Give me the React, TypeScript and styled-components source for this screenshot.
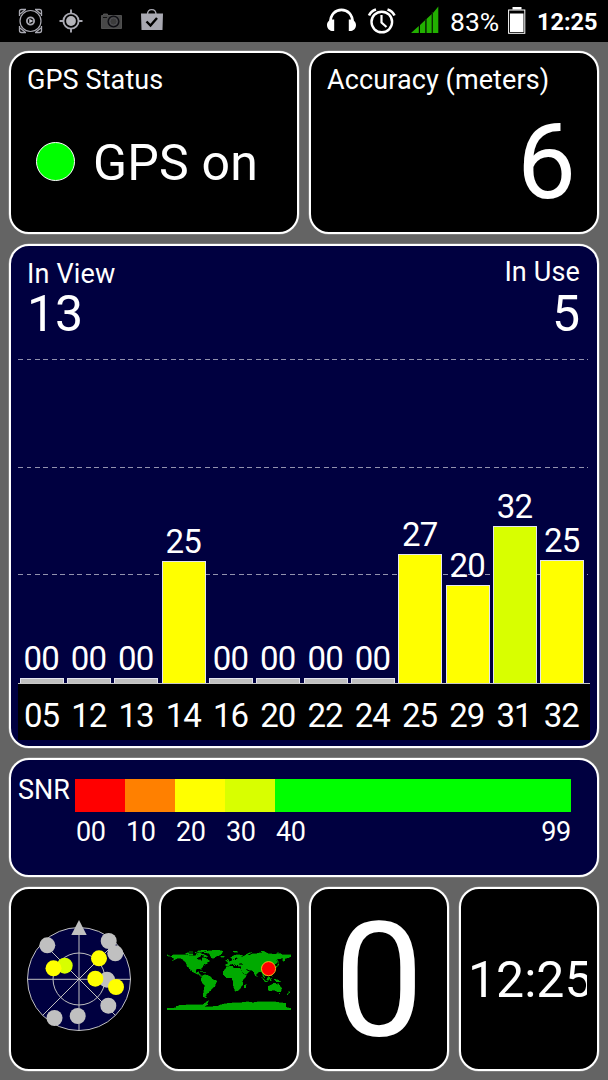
import React from 'react';
import styled, { createGlobalStyle } from 'styled-components';

const GlobalStyle = createGlobalStyle`
  * { box-sizing: border-box; }
  html, body { margin: 0; padding: 0; background: #646464; }
  body { font-family: Roboto, "Liberation Sans", sans-serif; color: #fff; overflow: hidden; }
  svg { display: block; flex: none; }
`;

const Screen = styled.div`
  width: 608px;
  height: 1080px;
  display: flex;
  flex-direction: column;
  background: #646464;
`;

const StatusBar = styled.header`
  height: 42px;
  background: #000;
  display: flex;
  justify-content: space-between;
  padding: 0 10px 0 16px;
`;

const StatusGroup = styled.div`
  display: flex;
  align-items: center;
`;

const StatusText = styled.span<{ $size: number; $weight: number; $width: number }>`
  font-size: ${p => p.$size}px;
  font-weight: ${p => p.$weight};
  width: ${p => p.$width}px;
  line-height: 44px;
  height: 42px;
  white-space: nowrap;
`;

const Board = styled.main`
  flex: 1;
  display: flex;
  flex-direction: column;
  gap: 10px;
  padding: 9px;
`;

const CardRow = styled.div<{ $cols: number; $height: number }>`
  display: grid;
  grid-template-columns: repeat(${p => p.$cols}, 1fr);
  grid-template-rows: 100%;
  gap: 10px;
  height: ${p => p.$height}px;
  flex: none;
`;

const Card = styled.section<{ $navy?: boolean; $center?: boolean }>`
  border: 2px solid #fff;
  border-radius: 20px;
  box-shadow: 0 0 0 0.5px rgba(255, 255, 255, 0.35);
  background: ${p => (p.$navy ? '#000040' : '#000')};
  display: flex;
  flex-direction: column;
  min-width: 0;
  ${p => p.$center && 'align-items: center; justify-content: center;'}
`;

const Label = styled.div`
  font-size: 27px;
  line-height: 32px;
  letter-spacing: 0.1px;
  padding: 11px 16px 0;
  white-space: nowrap;
`;

const GpsState = styled.div`
  display: flex;
  align-items: center;
  gap: 18px;
  margin: 38px 0 0 25px;
  font-size: 50px;
  line-height: 58px;
  letter-spacing: 0.2px;
  white-space: nowrap;
`;

const Lamp = styled.span`
  width: 39px;
  height: 39px;
  margin-bottom: 4px;
  border-radius: 50%;
  background: #00ff00;
  border: 1.5px solid #fff;
`;

const AccuracyValue = styled.div`
  font-size: 105px;
  line-height: 120px;
  margin-top: 7px;
  padding-right: 21px;
  text-align: right;
`;

const Counters = styled.div`
  display: flex;
  justify-content: space-between;
  height: 113px;
  padding: 0 17px 0 16px;
`;

const Counter = styled.div<{ $top: number; $right?: boolean }>`
  padding-top: ${p => p.$top}px;
  text-align: ${p => (p.$right ? 'right' : 'left')};
`;

const CounterName = styled.div`
  font-size: 27px;
  line-height: 32px;
  letter-spacing: 0.15px;
`;

const CounterValue = styled.div<{ $height: number }>`
  font-size: 50px;
  line-height: ${p => p.$height}px;
`;

const Plot = styled.div`
  position: relative;
  height: 325px;
  margin: 0 7px;
  border-bottom: 1px solid #c8c8c8;
`;

const GridLines = styled.div`
  position: absolute;
  inset: 0;
  display: flex;
  flex-direction: column;
`;

const GridLine = styled.div`
  flex: none;
  height: 107.7px;
  &::before {
    content: '';
    display: block;
    height: 1px;
    width: 570px;
    background: repeating-linear-gradient(90deg, #9292ae 0 4.7px, transparent 4.7px 8.5px);
  }
`;

const Columns = styled.div`
  position: relative;
  width: 568px;
  height: 100%;
  display: grid;
  grid-template-columns: repeat(12, 1fr);
`;

const Column = styled.div`
  display: flex;
  flex-direction: column;
  justify-content: flex-end;
  align-items: center;
  font-size: 33px;
  letter-spacing: -0.8px;
`;

const BarValue = styled.span`
  line-height: 38px;
  padding-right: 1px;
`;

const Bar = styled.div<{ $height: number; $color: string }>`
  width: 44px;
  height: ${p => p.$height}px;
  background: ${p => p.$color};
  border: 1px solid #e4e4f0;
  border-bottom: 0;
`;

const SatelliteIds = styled.div`
  height: 56px;
  margin: 0 7px;
  padding-right: 5px;
  background: #000;
  display: grid;
  grid-template-columns: repeat(12, 1fr);
  text-align: center;
  font-size: 33px;
  letter-spacing: -0.8px;
  line-height: 64px;
`;

const Legend = styled.div`
  display: flex;
  padding: 19px 26px 0 7px;
  font-size: 27px;
`;

const LegendName = styled.div`
  width: 57px;
  line-height: 23px;
`;

const Scale = styled.div`
  flex: 1;
  display: grid;
  grid-template-columns: 50px 50px 50px 50px 1fr;
`;

const Step = styled.div`
  letter-spacing: -0.3px;
`;

const Swatch = styled.div<{ $color: string }>`
  height: 33px;
  background: ${p => p.$color};
`;

const StepLabels = styled.div`
  display: flex;
  justify-content: space-between;
  line-height: 41px;
  padding-left: 1px;
`;

const Speed = styled.div`
  font-size: 160px;
  line-height: 170px;
  padding-top: 3px;
`;

const Clock = styled.div`
  width: 119px;
  overflow: hidden;
  font-size: 50px;
  line-height: 60px;
  white-space: nowrap;
  margin: 2px 3px 0 0;
`;

const bars = [
  { id: '05', snr: '00', h: 5 },
  { id: '12', snr: '00', h: 5 },
  { id: '13', snr: '00', h: 5 },
  { id: '14', snr: '25', h: 122 },
  { id: '16', snr: '00', h: 5 },
  { id: '20', snr: '00', h: 5 },
  { id: '22', snr: '00', h: 5 },
  { id: '24', snr: '00', h: 5 },
  { id: '25', snr: '27', h: 129 },
  { id: '29', snr: '20', h: 98 },
  { id: '31', snr: '32', h: 157 },
  { id: '32', snr: '25', h: 123 },
];

const barColor = (snr: string) => {
  const n = Number(snr);
  if (n === 0) return '#c0c0c0';
  return n >= 30 ? '#d8ff00' : '#ffff00';
};

const steps = [
  { label: '00', color: '#ff0000' },
  { label: '10', color: '#ff8000' },
  { label: '20', color: '#ffff00' },
  { label: '30', color: '#d8ff00' },
  { label: '40', color: '#00ff00', end: '99' },
];

const satellites: [number, number, string][] = [
  [47.3, 945.3, '#c0c0c0'],
  [108.7, 941, '#c0c0c0'],
  [115.3, 953.3, '#c0c0c0'],
  [64.7, 965.7, '#d8ff00'],
  [53.5, 968.3, '#ffff00'],
  [99, 958.3, '#ffff00'],
  [107, 979.7, '#c0c0c0'],
  [95.3, 978.7, '#ffff00'],
  [116, 987, '#ffff00'],
  [108.3, 1005.7, '#c0c0c0'],
  [77.7, 1016, '#c0c0c0'],
  [54.5, 1018, '#c0c0c0'],
];

const SkyView = () => (
  <svg width="116" height="120" viewBox="21 919 116 120">
    <circle cx="79" cy="979" r="51.5" fill="#000040" stroke="#c0c0c0" strokeWidth="1" />
    <g stroke="#c0c0c0" strokeWidth="1" fill="none">
      <circle cx="79" cy="979" r="26" />
      <path d="M27.5 979.3h103M79 927.500v103M42.500 942.500l73 73M115.500 942.500l-73 73" />
    </g>
    <path d="M79 920l7.700 15h-15.400z" fill="#c0c0c0" />
    {satellites.map(([x, y, c], i) => (
      <circle key={i} cx={x} cy={y} r="8" fill={c} />
    ))}
  </svg>
);

/* Land outlines as longitude / latitude pairs. */
const land: string[] = [
  '-168,66 -162,70 -156,71 -140,70 -128,70 -115,68 -108,68 -96,68 -94,72 -88,68 -82,69 -82,66 -87,64 -94,60 -92,57 -82,55 -80,51 -78,55 -77,60 -78,62 -70,61 -65,59 -60,55 -56,52 -60,50 -66,49 -60,46 -66,44 -70,43 -74,40 -76,35 -81,31 -80,26 -83,29 -90,30 -97,28 -97,22 -94,18 -90,21 -87,21 -88,16 -83,15 -83,10 -78,9 -83,8 -88,13 -95,16 -105,20 -109,26 -114,31 -110,24 -117,33 -122,37 -124,47 -131,54 -140,60 -150,60 -160,55 -166,54 -158,58 -165,62',
  '-180,71 -176,71 -176,68 -170,66 -170,65 -180,68',
  '-78,9 -72,12 -62,11 -52,5 -50,0 -35,-6 -39,-14 -41,-22 -48,-26 -53,-34 -58,-35 -58,-39 -65,-42 -66,-47 -69,-51 -65,-55 -74,-53 -75,-45 -72,-30 -70,-18 -76,-14 -81,-5 -80,1',
  '-73,78 -60,82 -30,84 -18,81 -22,73 -25,70 -40,65 -43,60 -50,61 -54,68 -58,75 -70,76',
  '-92,73 -82,73 -72,71 -62,66 -66,62 -74,65 -73,68 -80,70 -90,71',
  '-118,73 -105,73 -104,69 -114,69 -118,71',
  '-126,75 -117,76 -116,73 -124,71',
  '-98,77 -86,76 -80,74 -94,74',
  '-92,81 -80,83 -64,83 -76,79 -88,77 -90,79',
  '-116,79 -104,79 -104,77 -116,77',
  '-24,66 -14,66 -14,64 -22,63',
  '-10,55 -6,55 -6,52 -10,52',
  '-6,58 -2,58 0,53 2,51 -5,50 -3,54',
  '-17,21 -9,32 -5,36 10,37 11,33 20,31 32,31 37,22 43,12 51,12 48,5 41,-2 39,-8 40,-16 35,-22 32,-28 26,-34 18,-35 14,-25 12,-17 13,-8 9,-1 9,4 -8,4 -13,9 -17,14',
  '44,-25 48,-25 50,-15 44,-18',
  '-10,37 -9,43 -1,44 -4,48 3,51 8,54 10,58 13,55 20,55 24,59 30,60 22,61 25,65 18,61 16,56 10,59 5,60 6,63 15,69 28,71 40,67 33,66 38,64 45,68 60,69 68,73 80,73 88,76 104,78 114,74 130,72 142,73 160,70 180,70 180,66 178,63 163,60 162,53 157,51 156,58 162,62 150,59 142,59 135,54 141,52 139,47 132,43 128,39 129,35 126,35 125,39 118,39 122,36 120,32 121,27 116,23 108,21 109,13 105,9 100,13 104,2 98,9 97,17 91,22 87,21 80,15 79,9 76,10 73,19 67,25 57,26 49,30 52,24 59,22 54,17 44,13 39,21 35,29 36,36 27,37 26,40 32,42 41,42 37,46 30,46 28,42 23,40 22,37 19,41 13,45 18,40 16,38 10,44 3,42 -1,37 -6,36',
  '130,32 136,35 141,39 142,45 145,43 140,35 134,33',
  '142,54 144,50 142,46',
  '80,9 82,7 80,6',
  '95,5 101,0 106,-6 114,-8 105,-8 98,1',
  '109,1 116,7 119,4 116,-4 110,-3',
  '119,0 125,1 121,-1 123,-5 120,-5',
  '120,18 122,18 126,7 122,10',
  '131,-1 140,-2 150,-8 146,-8 138,-8 133,-4',
  '114,-22 122,-18 130,-12 136,-12 136,-15 141,-17 142,-11 146,-18 153,-27 150,-37 141,-38 137,-34 130,-32 118,-35 115,-34',
  '144,-41 148,-41 147,-43',
  '173,-35 178,-38 175,-41 173,-40',
  '172,-41 173,-43 168,-47 167,-45',
  '50,71 56,75 68,77 58,73 55,70',
  '12,80 22,80 26,79 16,77',
  '92,80 100,81 104,79 96,78',
  '138,76 150,75 140,74',
  '-180,-85 -152,-84 -154,-80 -145,-77 -120,-75 -100,-75 -75,-74 -66,-67 -58,-63 -64,-72 -61,-75 -75,-79 -60,-81 -35,-79 -18,-73 0,-70 30,-69 55,-66 70,-69 85,-66 130,-66 165,-71 164,-78 168,-83 180,-85 180,-90 -180,-90',
];

const toPoints = (outline: string) =>
  outline
    .split(' ')
    .map(pair => {
      const [lon, lat] = pair.split(',').map(Number);
      return `${lon},${-lat}`;
    })
    .join(' ');

const MapBox = styled.div`
  margin-right: 1px;
`;

const WorldMap = () => (
  <MapBox>
    <svg width="124" height="62" viewBox="-180 -90 360 180">
      <g fill="#00aa00" stroke="#00aa00" strokeWidth="1.200" shapeRendering="crispEdges">
        {land.map((o, i) => (
          <polygon key={i} points={toPoints(o)} />
        ))}
        <path d="M-84 -23l10 3M-73 -19h5" strokeWidth="2" />
      </g>
      <circle cx="114.800" cy="-30" r="20.500" fill="#ff0000" stroke="#ffcc20" strokeWidth="2.500" />
    </svg>
  </MapBox>
);

const StatusIcons = () => (
  <svg width="150" height="42" viewBox="16 0 150 42">
    <g fill="none" stroke="#a9a9b2">
      <circle cx="30.500" cy="21" r="10.500" strokeWidth="1.200" />
      <path
        d="M19.500 16v-4.500q0-2 2-2h4.500M35 9.500h4.500q2 0 2 2V16M41.500 26v4.500q0 2-2 2H35M26 32.500h-4.500q-2 0-2-2V26"
        strokeWidth="1.300"
      />
      <path d="M20 14l5-4M41 14l-5-4M20 28l5 4M41 28l-5 4" strokeWidth="1.300" />
      <circle cx="30.500" cy="21" r="3.600" strokeWidth="1.800" />
      <circle cx="71" cy="21" r="7.600" strokeWidth="1.900" />
      <path d="M71 9.500v4.500M71 28v4.500M59.500 21h4.500M78 21h4.500" strokeWidth="1.900" />
    </g>
    <path d="M29.300 18.800l4 2.200-4 2.200z" fill="#c4c4cc" />
    <circle cx="71" cy="21" r="4.900" fill="#b4b4ba" />
    <path d="M101.500 15.500h2v-1.500h4v1.500h14v13h-20z" fill="#484848" stroke="#5c5c5c" strokeWidth="0.800" />
    <circle cx="113.500" cy="21.500" r="5.400" fill="#3c3c3c" stroke="#0c0c12" strokeWidth="1.300" />
    <circle cx="113.500" cy="21.500" r="3.600" fill="none" stroke="#55555c" strokeWidth="0.800" />
    <path d="M103 17.500h4" stroke="#111" />
    <path d="M147.500 14.500c0-6.500 8.500-6.500 8.500 0" fill="none" stroke="#a9a9b2" strokeWidth="1.400" />
    <path d="M141 13.500h22l-.5 16.500h-21z" fill="#a9a9b2" />
    <path d="M146.500 21.500l4 4 6.500-7.500" fill="none" stroke="#000" strokeWidth="2.400" />
  </svg>
);

const SystemIcons = () => (
  <svg width="126" height="42" viewBox="324 0 126 42">
    <path d="M330.500 23c-1-17.500 23-17.500 22 0" fill="none" stroke="#fff" strokeWidth="2.800" />
    <path
      d="M334.200 19.500v11.500c-4 .5-7.200-2-7.200-6 0-3.500 3-6 7.200-5.500zM348.800 19.500v11.500c4 .5 7.200-2 7.200-6 0-3.500-3-6-7.200-5.500z"
      fill="#fff"
    />
    <g fill="none" stroke="#fff">
      <circle cx="381.800" cy="22" r="10.300" strokeWidth="2.400" />
      <path d="M381.500 15v7.500l5 4.500" strokeWidth="2.200" />
      <path d="M369 15.500q2-4.500 7-6M394.500 15.500q-2-4.500-7-6" strokeWidth="2.600" />
    </g>
    <path
      d="M411 33l7.800-7v7zM420 25l5.300-5v13H420zM426.500 19l5.300-5v19h-5.300zM433 13l5.300-6.500V33H433z"
      fill="#22b000"
    />
    <path d="M425.700 19v14M432.300 12v21" stroke="#0a3a00" strokeWidth="1" />
  </svg>
);

const Battery = () => (
  <svg width="34" height="42" viewBox="503 0 34 42">
    <path d="M512.500 9.500v-2.500h9v2.500" fill="#fff" />
    <rect x="508.600" y="10" width="16.200" height="23.300" fill="none" stroke="#fff" strokeWidth="1" />
    <rect x="510" y="13.500" width="13.500" height="18.500" fill="#fff" />
  </svg>
);

export default function App() {
  return (
    <Screen>
      <GlobalStyle />
      <StatusBar>
        <StatusGroup>
          <StatusIcons />
        </StatusGroup>
        <StatusGroup>
          <SystemIcons />
          <StatusText $size={26.5} $weight={400} $width={53}>83%</StatusText>
          <Battery />
          <StatusText $size={23.500} $weight={700} $width={61}>12:25</StatusText>
        </StatusGroup>
      </StatusBar>
      <Board>
        <CardRow $cols={2} $height={183}>
          <Card>
            <Label>GPS Status</Label>
            <GpsState>
              <Lamp />
              GPS on
            </GpsState>
          </Card>
          <Card>
            <Label>Accuracy (meters)</Label>
            <AccuracyValue>6</AccuracyValue>
          </Card>
        </CardRow>
        <CardRow $cols={1} $height={504}>
          <Card $navy>
            <Counters>
              <Counter $top={12}>
                <CounterName>In View</CounterName>
                <CounterValue $height={48}>13</CounterValue>
              </Counter>
              <Counter $top={10} $right>
                <CounterName>In Use</CounterName>
                <CounterValue $height={52}>5</CounterValue>
              </Counter>
            </Counters>
            <Plot>
              <GridLines>
                <GridLine />
                <GridLine />
                <GridLine />
              </GridLines>
              <Columns>
                {bars.map(b => (
                  <Column key={b.id}>
                    <BarValue>{b.snr}</BarValue>
                    <Bar $height={b.h} $color={barColor(b.snr)} />
                  </Column>
                ))}
              </Columns>
            </Plot>
            <SatelliteIds>
              {bars.map(b => (
                <span key={b.id}>{b.id}</span>
              ))}
            </SatelliteIds>
          </Card>
        </CardRow>
        <CardRow $cols={1} $height={119}>
          <Card $navy>
            <Legend>
              <LegendName>SNR</LegendName>
              <Scale>
                {steps.map(s => (
                  <Step key={s.label}>
                    <Swatch $color={s.color} />
                    <StepLabels>
                      <span>{s.label}</span>
                      {s.end && <span>{s.end}</span>}
                    </StepLabels>
                  </Step>
                ))}
              </Scale>
            </Legend>
          </Card>
        </CardRow>
        <CardRow $cols={4} $height={184}>
          <Card $center>
            <SkyView />
          </Card>
          <Card $center>
            <WorldMap />
          </Card>
          <Card $center>
            <Speed>0</Speed>
          </Card>
          <Card $center>
            <Clock>12:25</Clock>
          </Card>
        </CardRow>
      </Board>
    </Screen>
  );
}
